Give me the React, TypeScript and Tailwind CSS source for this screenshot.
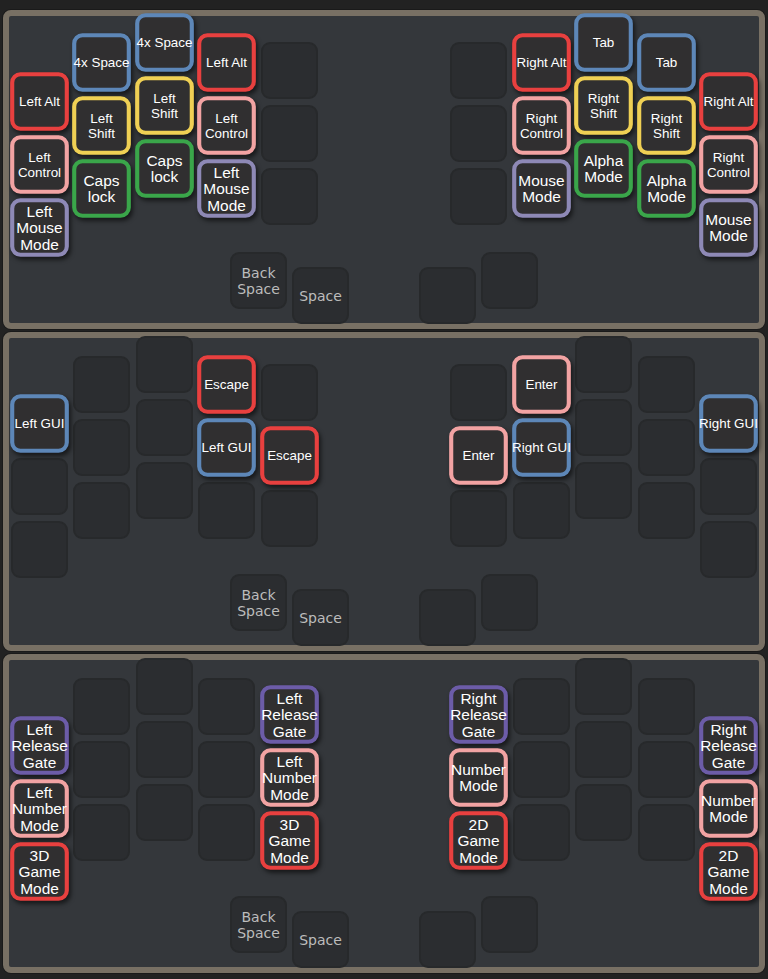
type KeyDef = { t: string[]; c: string; big?: boolean } | null;

const borderColors: Record<string, string> = {
  blue: 'border-[#5d87b8]',
  red: 'border-[#e8403f]',
  yellow: 'border-[#efd054]',
  pink: 'border-[#f2a3a3]',
  green: 'border-[#3aa64a]',
  lavender: 'border-[#8e89b6]',
  purple: 'border-[#6c5ca8]',
};

const E: KeyDef = null;
const k = (label: string, c: string, big = false): KeyDef => ({ t: label.split('|'), c, big });

// column offsets and gaps, left half is col0..col4, right half mirrors it
const leftOffsets = ['mt-[59px]', 'mt-[20px]', 'mt-0', 'mt-[20px]', 'mt-[28px]'];
const leftGaps = ['', 'ml-[5px]', 'ml-[6px]', 'ml-[5px]', 'ml-[6px]'];
const rightOffsets = ['mt-[28px]', 'mt-[20px]', 'mt-0', 'mt-[20px]', 'mt-[59px]'];
const rightGaps = ['', 'ml-[6px]', 'ml-[5px]', 'ml-[6px]', 'ml-[5px]'];

const empty3: KeyDef[] = [E, E, E];

const layers: { left: KeyDef[][]; right: KeyDef[][] }[] = [
  {
    left: [
      [k('Left Alt', 'red'), k('Left|Control', 'pink'), k('Left|Mouse|Mode', 'lavender', true)],
      [k('4x Space', 'blue'), k('Left|Shift', 'yellow'), k('Caps|lock', 'green', true)],
      [k('4x Space', 'blue'), k('Left|Shift', 'yellow'), k('Caps|lock', 'green', true)],
      [k('Left Alt', 'red'), k('Left|Control', 'pink'), k('Left|Mouse|Mode', 'lavender', true)],
      empty3,
    ],
    right: [
      empty3,
      [k('Right Alt', 'red'), k('Right|Control', 'pink'), k('Mouse|Mode', 'lavender', true)],
      [k('Tab', 'blue'), k('Right|Shift', 'yellow'), k('Alpha|Mode', 'green', true)],
      [k('Tab', 'blue'), k('Right|Shift', 'yellow'), k('Alpha|Mode', 'green', true)],
      [k('Right Alt', 'red'), k('Right|Control', 'pink'), k('Mouse|Mode', 'lavender', true)],
    ],
  },
  {
    left: [
      [k('Left GUI', 'blue'), E, E],
      empty3,
      empty3,
      [k('Escape', 'red'), k('Left GUI', 'blue'), E],
      [E, k('Escape', 'red'), E],
    ],
    right: [
      [E, k('Enter', 'pink'), E],
      [k('Enter', 'pink'), k('Right GUI', 'blue'), E],
      empty3,
      empty3,
      [k('Right GUI', 'blue'), E, E],
    ],
  },
  {
    left: [
      [k('Left|Release|Gate', 'purple', true), k('Left|Number|Mode', 'pink', true), k('3D|Game|Mode', 'red', true)],
      empty3,
      empty3,
      empty3,
      [k('Left|Release|Gate', 'purple', true), k('Left|Number|Mode', 'pink', true), k('3D|Game|Mode', 'red', true)],
    ],
    right: [
      [k('Right|Release|Gate', 'purple', true), k('Number|Mode', 'pink', true), k('2D|Game|Mode', 'red', true)],
      empty3,
      empty3,
      empty3,
      [k('Right|Release|Gate', 'purple', true), k('Number|Mode', 'pink', true), k('2D|Game|Mode', 'red', true)],
    ],
  },
];

function EmptyKey({ className = '', children }: { className?: string; children?: React.ReactNode }) {
  return (
    <div
      className={`w-[57px] h-[57px] shrink-0 rounded-[9px] bg-[#2b2d30] border-2 border-[#27292b] flex flex-col items-center justify-center text-[14px] leading-[16px] text-[#bcbcbc] font-['DejaVu_Sans',sans-serif] ${className}`}
    >
      {children}
    </div>
  );
}

function Key({ def }: { def: KeyDef }) {
  if (!def) return <EmptyKey />;
  return (
    <div
      className={`relative z-10 w-[57px] h-[57px] shrink-0 scale-[1.03] rounded-[10px] border-4 ${borderColors[def.c]} bg-[#302f30] shadow-[2px_3px_4px_rgba(0,0,0,0.55)] flex flex-col items-center justify-center text-white font-['Liberation_Sans',Arial,sans-serif] ${
        def.big ? 'text-[15px] leading-[16px]' : 'text-[13px] leading-[15px]'
      }`}
    >
      {def.t.map((line) => (
        <span key={line} className="whitespace-nowrap">
          {line}
        </span>
      ))}
    </div>
  );
}

function Panel({ left, right }: { left: KeyDef[][]; right: KeyDef[][] }) {
  return (
    <div className="h-[319px] rounded-[8px] border-[6px] border-[#787064] bg-[#34373b] px-[2px] flex justify-between shadow-[0_0_0_1px_#1a1a1a]">
      <div className="flex flex-col items-start -mt-[2px]">
        <div className="flex">
          {left.map((col, i) => (
            <div key={i} className={`flex flex-col gap-[6px] ${leftOffsets[i]} ${leftGaps[i]}`}>
              {col.map((def, j) => (
                <Key key={j} def={def} />
              ))}
            </div>
          ))}
        </div>
        <div className="flex items-start gap-[5px] ml-[219px] -mt-[4px]">
          <EmptyKey>
            <span>Back</span>
            <span>Space</span>
          </EmptyKey>
          <EmptyKey className="mt-[15px]">
            <span>Space</span>
          </EmptyKey>
        </div>
      </div>

      <div className="flex flex-col items-end -mt-[2px]">
        <div className="flex">
          {right.map((col, i) => (
            <div key={i} className={`flex flex-col gap-[6px] ${rightOffsets[i]} ${rightGaps[i]}`}>
              {col.map((def, j) => (
                <Key key={j} def={def} />
              ))}
            </div>
          ))}
        </div>
        <div className="flex items-start gap-[5px] mr-[219px] -mt-[4px]">
          <EmptyKey className="mt-[15px]" />
          <EmptyKey />
        </div>
      </div>
    </div>
  );
}

export default function App() {
  return (
    <div className="min-h-screen bg-[#222222] px-[3px] pt-[10px] pb-[6px] flex flex-col gap-[3px]">
      {layers.map((layer, i) => (
        <Panel key={i} left={layer.left} right={layer.right} />
      ))}
    </div>
  );
}
